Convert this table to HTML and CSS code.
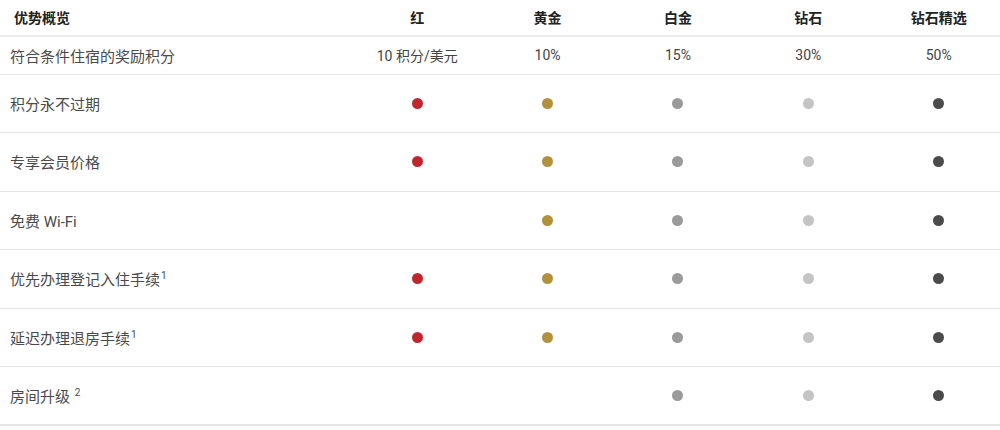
FILE: index.html
```html
<!DOCTYPE html>
<html lang="zh-CN">
<head>
    <meta charset="UTF-8">
    <meta name="viewport" content="width=device-width, initial-scale=1.0">
    <title>优势概览</title>
    <link rel="stylesheet" href="styles.css">
</head>
<body>
    <div class="benefits">
        <div class="row head">
            <div class="label">优势概览</div>
            <div class="cell">红</div>
            <div class="cell">黄金</div>
            <div class="cell">白金</div>
            <div class="cell">钻石</div>
            <div class="cell">钻石精选</div>
        </div>
        <div class="row short">
            <div class="label">符合条件住宿的奖励积分</div>
            <div class="cell">10 积分/美元</div>
            <div class="cell">10%</div>
            <div class="cell">15%</div>
            <div class="cell">30%</div>
            <div class="cell">50%</div>
        </div>
        <div class="row">
            <div class="label">积分永不过期</div>
            <div class="cell"><span class="dot red"></span></div>
            <div class="cell"><span class="dot gold"></span></div>
            <div class="cell"><span class="dot platinum"></span></div>
            <div class="cell"><span class="dot diamond"></span></div>
            <div class="cell"><span class="dot elite"></span></div>
        </div>
        <div class="row">
            <div class="label">专享会员价格</div>
            <div class="cell"><span class="dot red"></span></div>
            <div class="cell"><span class="dot gold"></span></div>
            <div class="cell"><span class="dot platinum"></span></div>
            <div class="cell"><span class="dot diamond"></span></div>
            <div class="cell"><span class="dot elite"></span></div>
        </div>
        <div class="row">
            <div class="label">免费 Wi-Fi</div>
            <div class="cell"></div>
            <div class="cell"><span class="dot gold"></span></div>
            <div class="cell"><span class="dot platinum"></span></div>
            <div class="cell"><span class="dot diamond"></span></div>
            <div class="cell"><span class="dot elite"></span></div>
        </div>
        <div class="row">
            <div class="label">优先办理登记入住手续<sup>1</sup></div>
            <div class="cell"><span class="dot red"></span></div>
            <div class="cell"><span class="dot gold"></span></div>
            <div class="cell"><span class="dot platinum"></span></div>
            <div class="cell"><span class="dot diamond"></span></div>
            <div class="cell"><span class="dot elite"></span></div>
        </div>
        <div class="row">
            <div class="label">延迟办理退房手续<sup>1</sup></div>
            <div class="cell"><span class="dot red"></span></div>
            <div class="cell"><span class="dot gold"></span></div>
            <div class="cell"><span class="dot platinum"></span></div>
            <div class="cell"><span class="dot diamond"></span></div>
            <div class="cell"><span class="dot elite"></span></div>
        </div>
        <div class="row last">
            <div class="label">房间升级 <sup>2</sup></div>
            <div class="cell"></div>
            <div class="cell"></div>
            <div class="cell"><span class="dot platinum"></span></div>
            <div class="cell"><span class="dot diamond"></span></div>
            <div class="cell"><span class="dot elite"></span></div>
        </div>
    </div>
</body>
</html>
```

FILE: styles.css
```css
body {
    margin: 0;
    background: #fff;
    font-family: Roboto, "Noto Sans CJK SC", sans-serif;
    font-size: 14px;
    color: #444;
    overflow: hidden;
}
.benefits {
    width: 1004px;
}
.row {
    box-sizing: border-box;
    display: grid;
    grid-template-columns: 352px repeat(5, 130.4px);
    align-items: center;
    height: 58.5px;
    border-bottom: 1px solid #e6e6e6;
}
.row.head {
    height: 37px;
    padding-bottom: 1px;
    border-bottom: 2px solid #ececec;
    font-weight: bold;
    color: #222;
}
.row.short {
    height: 37.5px;
}
.row.last {
    border-bottom: 2px solid #e3e3e3;
}
.label {
    padding-left: 10px;
    font-size: 15px;
    color: #4a4a4a;
}
.head .label {
    padding-left: 14px;
    font-size: 14px;
    color: #222;
}
.cell {
    display: flex;
    justify-content: center;
    align-items: center;
}
sup {
    font-size: 10px;
    line-height: 0;
    vertical-align: 6px;
    margin-left: 1px;
}
.dot {
    display: block;
    width: 11px;
    height: 11px;
    border-radius: 50%;
}
.red { background: #c0272d; }
.gold { background: #b2913d; }
.platinum { background: #9a9a9a; }
.diamond { background: #c4c4c4; }
.elite { background: #4b4b4b; }
```
